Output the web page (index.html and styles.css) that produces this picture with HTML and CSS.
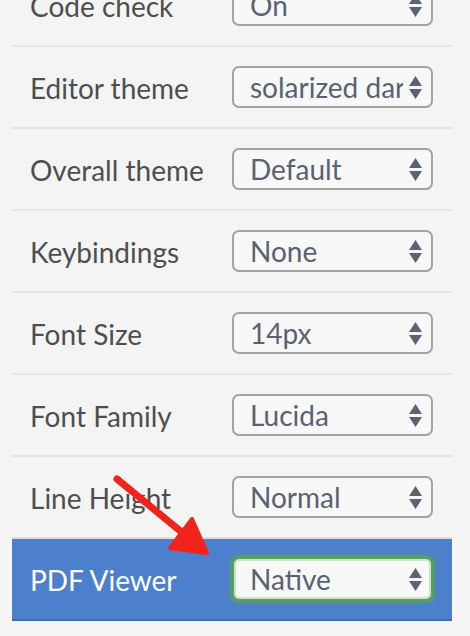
FILE: index.html
```html
<!DOCTYPE html>
<html>

<head>
    <title>Settings</title>
    <link rel="stylesheet" href="styles.css">
</head>

<body>
    <div class="settings">
        <div class="row">
            <label class="label">Code check</label>
            <div class="select"><span class="value">On</span>
                <svg class="arrows" viewBox="0 0 13 23"><path d="M6.5 0 L13 10 L0 10 Z M0 13 L13 13 L6.5 23 Z"/></svg>
            </div>
        </div>
        <div class="row">
            <label class="label">Editor theme</label>
            <div class="select"><span class="value">solarized dark</span>
                <svg class="arrows" viewBox="0 0 13 23"><path d="M6.5 0 L13 10 L0 10 Z M0 13 L13 13 L6.5 23 Z"/></svg>
            </div>
        </div>
        <div class="row">
            <label class="label">Overall theme</label>
            <div class="select"><span class="value">Default</span>
                <svg class="arrows" viewBox="0 0 13 23"><path d="M6.5 0 L13 10 L0 10 Z M0 13 L13 13 L6.5 23 Z"/></svg>
            </div>
        </div>
        <div class="row">
            <label class="label">Keybindings</label>
            <div class="select"><span class="value">None</span>
                <svg class="arrows" viewBox="0 0 13 23"><path d="M6.5 0 L13 10 L0 10 Z M0 13 L13 13 L6.5 23 Z"/></svg>
            </div>
        </div>
        <div class="row">
            <label class="label">Font Size</label>
            <div class="select"><span class="value">14px</span>
                <svg class="arrows" viewBox="0 0 13 23"><path d="M6.5 0 L13 10 L0 10 Z M0 13 L13 13 L6.5 23 Z"/></svg>
            </div>
        </div>
        <div class="row">
            <label class="label">Font Family</label>
            <div class="select"><span class="value">Lucida</span>
                <svg class="arrows" viewBox="0 0 13 23"><path d="M6.5 0 L13 10 L0 10 Z M0 13 L13 13 L6.5 23 Z"/></svg>
            </div>
        </div>
        <div class="row">
            <label class="label">Line Height</label>
            <div class="select"><span class="value">Normal</span>
                <svg class="arrows" viewBox="0 0 13 23"><path d="M6.5 0 L13 10 L0 10 Z M0 13 L13 13 L6.5 23 Z"/></svg>
            </div>
        </div>
        <div class="row active">
            <label class="label">PDF Viewer</label>
            <div class="select focused"><span class="value">Native</span>
                <svg class="arrows" viewBox="0 0 13 23"><path d="M6.5 0 L13 10 L0 10 Z M0 13 L13 13 L6.5 23 Z"/></svg>
            </div>
        </div>

        <!-- hand drawn pointer -->
        <svg class="pointer" viewBox="0 0 110 95" width="110" height="95">
            <path d="M7 9 L74 64" stroke="#f2231c" stroke-width="7" stroke-linecap="round" fill="none"/>
            <path d="M82 49 L60 78 L97 83 Z" fill="#f2231c" stroke="#f2231c" stroke-width="4" stroke-linejoin="round"/>
        </svg>
    </div>
</body>

</html>
```

FILE: styles.css
```css
body {
    margin: 0;
    background-color: #f4f4f4;
    font-family: Lato, "Liberation Sans", sans-serif;
    overflow: hidden;
}

.settings {
    position: relative;
    width: 440px;
    margin: -35px 0 0 12px;
}

.row {
    display: flex;
    align-items: center;
    height: 80px;
    border-bottom: 2px solid #e4e4e4;
}

.label {
    width: 202px;
    padding-left: 18px;
    padding-top: 2px;
    font-size: 28px;
    color: #4e4e4e;
}

.select {
    display: flex;
    align-items: center;
    box-sizing: border-box;
    width: 201px;
    height: 42px;
    padding: 0 9px 0 16px;
    background-color: #f8f8f8;
    border: 2px solid #a3a3a3;
    border-radius: 7px;
}

.value {
    flex: 1;
    overflow: hidden;
    white-space: nowrap;
    font-size: 28px;
    color: #586274;
}

.arrows {
    width: 13px;
    height: 23px;
    margin-left: 6px;
    fill: #5a6476;
}

.active {
    background-color: #4c80cc;
    border-top: 2px solid #dcdcdc;
    border-bottom: 2px solid #3f6cb3;
    margin-top: -2px;
}

.active .label {
    color: #ffffff;
}

.select.focused {
    width: 197px;
    height: 40px;
    margin-left: 2px;
    padding: 0 7px 0 14px;
    border: 2px solid #cde3c6;
    border-radius: 5px;
    box-shadow: 0 0 3px 4px #58a060;
}

.pointer {
    position: absolute;
    left: 98px;
    top: 505px;
}
```
